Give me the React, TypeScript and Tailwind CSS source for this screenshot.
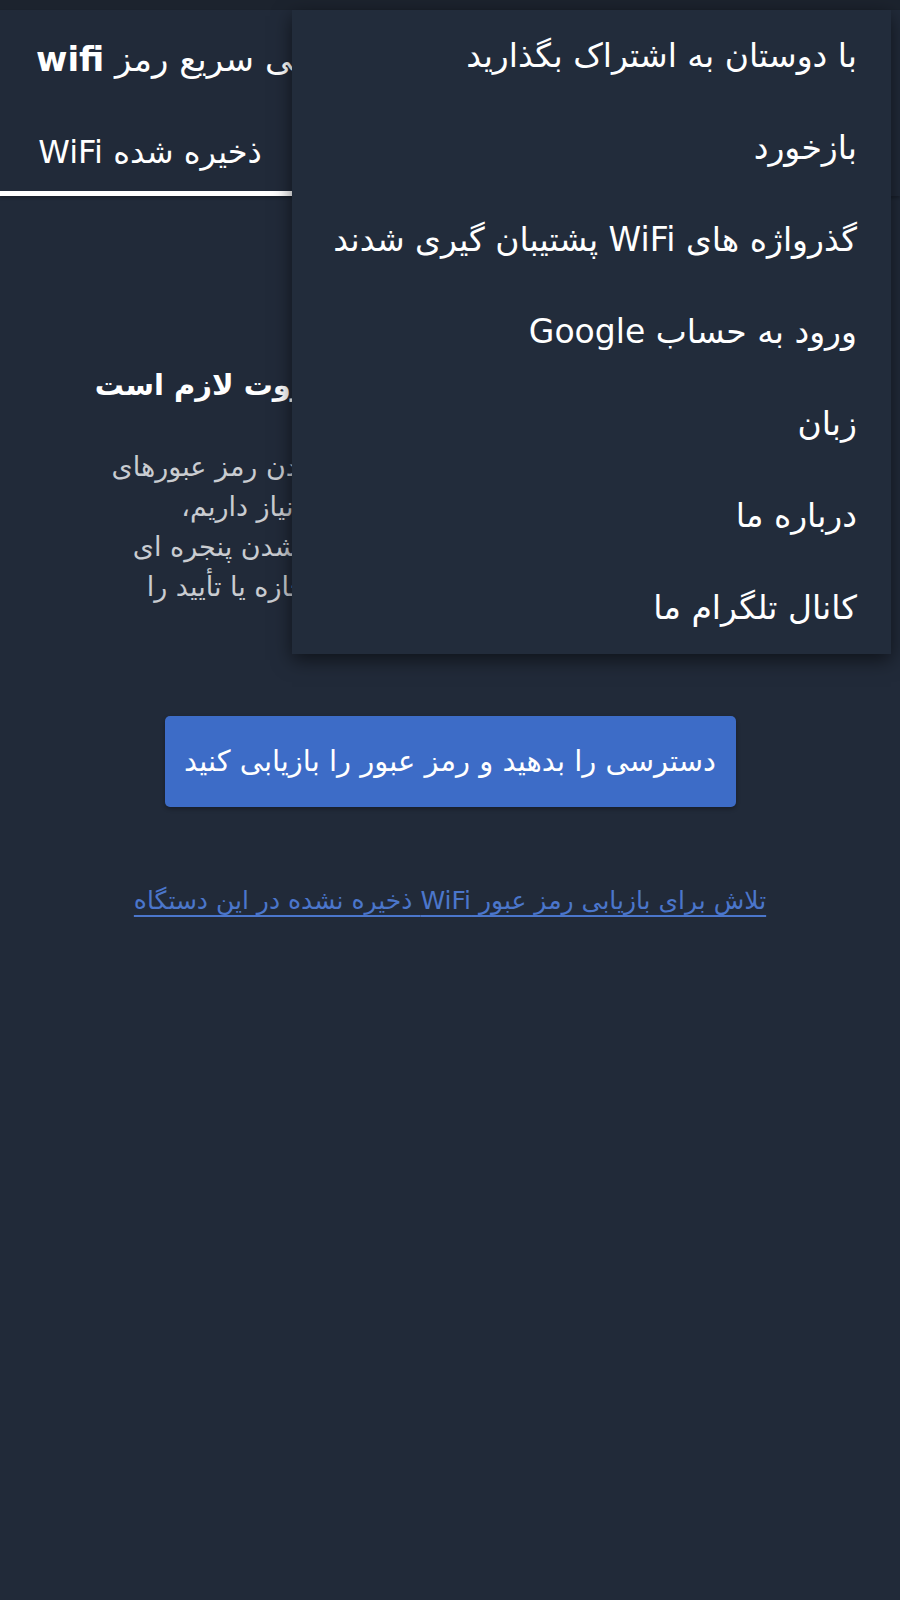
const menuItems = [
  "با دوستان به اشتراک بگذارید",
  "بازخورد",
  "گذرواژه های WiFi پشتیبان گیری شدند",
  "ورود به حساب Google",
  "زبان",
  "درباره ما",
  "کانال تلگرام ما",
];

const bodyLines = [
  "برای دسترسی به فایل های سیستمی و خواندن رمز عبورهای",
  "ذخیره شده، به دسترسی روت گوشی نیاز داریم،",
  "لطفا پس از لمس دکمه زیر در صورت باز شدن پنجره ای",
  "از طرف اپلیکیشن مدیریت روت، گزینه اجازه یا تأیید را",
  "انتخاب کنید.",
];

export default function App() {
  return (
    <div
      className="relative min-h-[1600px] w-[900px] bg-[#212a39] text-white"
      style={{ fontFamily: '"DejaVu Sans", "Noto Sans", sans-serif' }}
    >
      <div className="h-[10px] bg-[#1c232e]" />

      <header className="shadow-[0_2px_3px_rgba(0,0,0,0.25)]">
        <div className="flex h-[98px] items-center pl-[36px]">
          <h1 dir="rtl" className="text-[34px] font-bold leading-none">
            <span className="font-normal">بازیابی سریع رمز </span>wifi
          </h1>
        </div>
        <div className="grid h-[88px] grid-cols-3">
          <div className="flex items-center justify-center border-b-[5px] border-white pt-[5px]">
            <span dir="rtl" className="text-[32px]">ذخیره شده WiFi</span>
          </div>
          <div className="flex items-center justify-center">
            <span dir="rtl" className="text-[32px] text-gray-400">تمام شبکه ها</span>
          </div>
          <div className="flex items-center justify-center">
            <span dir="rtl" className="text-[32px] text-gray-400">ابزارها</span>
          </div>
        </div>
      </header>

      <main dir="rtl" className="flex flex-col items-center pt-[169px] text-center">
        <h2 className="text-[29px] font-bold leading-[40px]">
          برای بازیابی رمز عبورها دسترسی روت لازم است
        </h2>
        <div className="mt-[42px] whitespace-nowrap text-[27px] leading-[40px] text-[#c9ccd1]">
          {bodyLines.map((line, i) => (
            <p key={i}>{line}</p>
          ))}
        </div>

        <button className="mt-[69px] h-[91px] w-[571px] rounded-[5px] bg-[#3d6cc7] text-[29px] text-white shadow-[0_2px_4px_rgba(0,0,0,0.3)]">
          دسترسی را بدهید و رمز عبور را بازیابی کنید
        </button>

        <a className="mt-[74px] text-[25px] leading-[40px] text-[#4b76cb] underline underline-offset-[6px]">
          تلاش برای بازیابی رمز عبور WiFi ذخیره نشده در این دستگاه
        </a>
      </main>

      <div
        dir="rtl"
        className="absolute left-[292px] top-[10px] w-[599px] bg-[#222c3b] shadow-[0_6px_18px_rgba(0,0,0,0.55)]"
      >
        {menuItems.map((item) => (
          <div key={item} className="flex h-[92px] items-center px-[34px] text-[33px]">
            {item}
          </div>
        ))}
      </div>
    </div>
  );
}
